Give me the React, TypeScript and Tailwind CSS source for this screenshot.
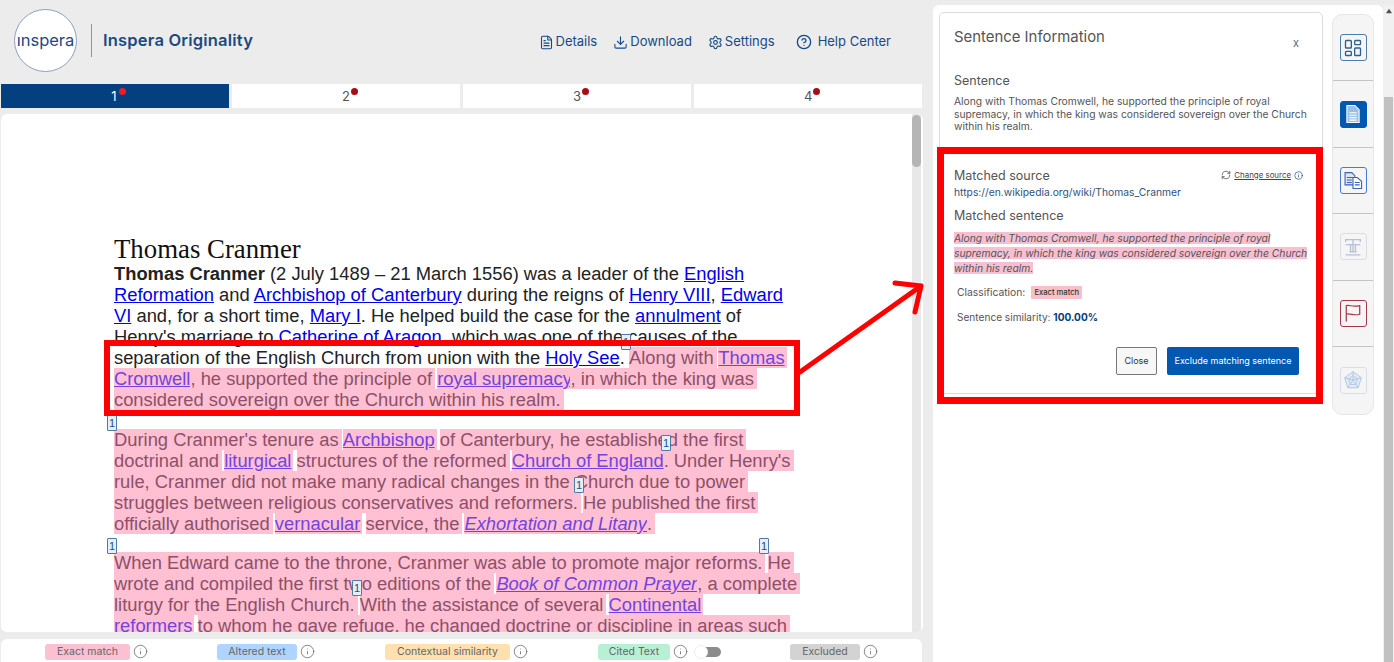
import { CircleHelp, Download, FileText, Info, LayoutDashboard, RefreshCw, Settings } from "lucide-react";
import type { ReactNode } from "react";

const A = ({ children }: { children: ReactNode }) => (
  <a className="text-[#0000ee] underline">{children}</a>
);

// highlighted run, text gets washed out like the overlay in the report
const H = ({ children }: { children: ReactNode }) => (
  <span className="bg-[#ffc0d3] text-[#8d5069] [box-decoration-break:clone] shadow-[3px_0_0_#ffc0d3]">{children}</span>
);

const HL = ({ children, italic }: { children: ReactNode; italic?: boolean }) => (
  <a className={`bg-[#ffc0d3] text-[#7343e0] underline [box-decoration-break:clone] shadow-[2px_0_0_#ffc0d3] ${italic ? "italic" : ""}`}>
    {children}
  </a>
);

const Cite = ({ className }: { className: string }) => (
  <span className={`absolute flex h-[16px] w-[10px] items-center justify-center rounded-[1px] border border-[#4d7ba3] bg-[#e6eff5] font-['Liberation_Sans',sans-serif] text-[11px] leading-none text-[#1f4f7d] ${className}`}>
    1
  </span>
);

const NavItem = ({ icon, label, className }: { icon: ReactNode; label: string; className?: string }) => (
  <div className={`flex items-center gap-[2px] text-[13px] text-[#154a86] ${className ?? ""}`}>
    {icon}
    <span>{label}</span>
  </div>
);

const Tab = ({ n, active }: { n: number; active?: boolean }) => (
  <div className={`flex h-[24px] flex-1 items-center justify-center text-[13px] ${active ? "bg-[#04407f] text-white" : "bg-white text-[#555]"}`}>
    <span className={`relative top-[1px] ${active ? "-left-[1px]" : ""}`}>
      {n}
      <span className={`absolute top-[1px] h-[7px] w-[7px] rounded-full ${active ? "left-[8px] bg-[#ee1c25]" : "left-[9px] bg-[#a80d16]"}`} />
    </span>
  </div>
);

const LegendItem = ({ label, color, width, className }: { label: string; color: string; width: string; className: string }) => (
  <div className={`flex items-center ${className}`}>
    <span className={`flex h-[16px] items-center justify-center rounded-[3px] text-[10.5px] text-[#666] ${color} ${width}`}>{label}</span>
    <Info className="ml-[3px] h-[15px] w-[15px] text-[#666]" strokeWidth={1.25} />
  </div>
);

const SideButton = ({ children, className }: { children: ReactNode; className: string }) => (
  <div className="flex h-[66.4px] items-center justify-center border-b border-[#c4c4c4] last:border-b-0">
    <div className={`flex h-[27px] w-[27px] items-center justify-center rounded-[3px] border ${className}`}>{children}</div>
  </div>
);

const App = () => {
  return (
    <div className="relative flex h-[662px] w-[1394px] overflow-hidden bg-[#ececec] font-['Inter',sans-serif]">
      {/* Left: report */}
      <main className="flex w-[923px] shrink-0 flex-col pl-[1px]">
        <header className="flex h-[84px] shrink-0 items-center pb-[3px] pl-[13px]">
          <div className="flex h-[63px] w-[63px] items-center justify-center rounded-full border border-[#8ca0bd] bg-white text-[16.5px] text-[#1c4a80]">
            ınspera
          </div>
          <div className="ml-[14px] h-[33px] w-px bg-[#8298b4]" />
          <div className="mb-[1px] ml-[11px] text-[16.5px] font-semibold tracking-[0.2px] text-[#1c4a80]">Inspera Originality</div>
          <div className="ml-auto flex items-center pr-[32px] pt-[3px]">
            <NavItem icon={<FileText className="h-[15px] w-[15px]" strokeWidth={1.75} />} label="Details" />
            <NavItem className="ml-[16px]" icon={<Download className="h-[15px] w-[15px]" strokeWidth={1.75} />} label="Download" />
            <NavItem className="ml-[16px]" icon={<Settings className="h-[15px] w-[15px]" strokeWidth={1.75} />} label="Settings" />
            <NavItem className="ml-[21px] gap-[6px]" icon={<CircleHelp className="h-[16px] w-[16px]" strokeWidth={2} />} label="Help Center" />
          </div>
        </header>

        <nav className="flex shrink-0 gap-[3.5px] pr-[1px]">
          <Tab n={1} active />
          <Tab n={2} />
          <Tab n={3} />
          <Tab n={4} />
        </nav>

        <section className="relative mt-[6px] h-[518px] shrink-0 overflow-hidden rounded-[6px] bg-white pl-[113px] pr-[120px] pt-[121px] font-['Liberation_Sans',sans-serif] text-[18.35px] leading-[21px] text-[#222]">
          <h1 className="font-['Liberation_Serif',serif] text-[26.8px] leading-[28px] text-[#111]">Thomas Cranmer</h1>
          <p>
            <b>Thomas Cranmer</b> (2 July 1489 – 21 March 1556) was a leader of the <A>English Reformation</A> and{" "}
            <A>Archbishop of Canterbury</A> during the reigns of <A>Henry VIII</A>, <A>Edward VI</A> and, for a short time,{" "}
            <A>Mary I</A>. He helped build the case for the <A>annulment</A> of Henry's marriage to <A>Catherine of Aragon</A>, which
            was one of the causes of the separation of the English Church from union with the <A>Holy See</A>. <H>Along with</H>{" "}
            <HL>Thomas Cromwell</HL>
            <H>, he supported the principle of</H> <HL>royal supremacy</HL>
            <H>, in which the king was considered sovereign over the Church within his realm.</H>
          </p>
          <p className="mt-[18.6px]">
            <H>During Cranmer's tenure as</H> <HL>Archbishop</HL> <H>of Canterbury, he established the first doctrinal and</H>{" "}
            <HL>liturgical</HL> <H>structures of the reformed</H> <HL>Church of England</HL>
            <H>. Under Henry's rule, Cranmer did not make many radical changes in the Church due to power struggles between religious conservatives and reformers.</H>{" "}
            <H>He published the first officially authorised</H> <HL>vernacular</HL> <H>service, the</H>{" "}
            <HL italic>Exhortation and Litany</HL>
            <H>.</H>
          </p>
          <p className="mt-[18.4px]">
            <H>When Edward came to the throne, Cranmer was able to promote major reforms.</H> <H>He wrote and compiled the first two editions of the</H>{" "}
            <HL italic>Book of Common Prayer</HL>
            <H>, a complete liturgy for the English Church.</H> <H>With the assistance of several</H> <HL>Continental<br />reformers</HL>{" "}
            <H>to whom he gave refuge, he changed doctrine or discipline in areas such</H>
          </p>
          <Cite className="left-[620px] top-[220px]" />
          <Cite className="left-[106px] top-[301px]" />
          <Cite className="left-[660px] top-[321px]" />
          <Cite className="left-[573px] top-[363px]" />
          <Cite className="left-[106px] top-[424px]" />
          <Cite className="left-[758px] top-[424px]" />
          <Cite className="left-[351px] top-[466px]" />
          {/* scrollbar of the document */}
          <div className="absolute bottom-0 right-[2px] top-0 w-[9px] bg-[#e8e8e8]">
            <div className="mt-[1px] h-[52px] rounded-full bg-[#b5b5b5]" />
          </div>
        </section>

        <footer className="mr-[1px] mt-[7px] flex h-[23px] shrink-0 items-center rounded-t-[6px] bg-white pt-[2px]">
          <LegendItem className="ml-[44px]" label="Exact match" color="bg-[#fcc0d3]" width="w-[85px]" />
          <LegendItem className="ml-[69px]" label="Altered text" color="bg-[#aed4ff]" width="w-[80px]" />
          <LegendItem className="ml-[70px]" label="Contextual similarity" color="bg-[#ffe0ae]" width="w-[125px]" />
          <LegendItem className="ml-[70px]" label="Cited Text" color="bg-[#b8f0d5]" width="w-[72px]" />
          <div className="relative ml-[7px] h-[10px] w-[26px] rounded-full bg-[#8c8c8c]">
            <span className="absolute left-[-1px] top-[-2px] h-[14px] w-[14px] rounded-full border border-[#eee] bg-white" />
          </div>
          <LegendItem className="ml-[69px]" label="Excluded" color="bg-[#d3d3d3]" width="w-[70px]" />
        </footer>
      </main>

      {/* Right: sentence panel */}
      <aside className="ml-[10px] mt-[5px] flex w-[450px] shrink-0 gap-[9px] rounded-t-[6px] bg-white pl-[6px] pt-[7px] text-[#555]">
        <div className="h-[382px] w-[384px] shrink-0 rounded-[5px] border border-[#dcdcdc] px-[14px]">
          <div className="flex items-start justify-between">
            <h2 className="mt-[15px] text-[14.9px] leading-[18px]">Sentence Information</h2>
            <span className="mr-[9px] mt-[23px] text-[11px] leading-[14px] text-[#5a6a7a]">x</span>
          </div>
          <h3 className="mt-[23px] text-[12.5px] leading-[16px]">Sentence</h3>
          <p className="mt-[6px] text-[10.3px] leading-[12.5px]">
            Along with Thomas Cromwell, he supported the principle of royal supremacy, in which the king was considered sovereign over the Church within his realm.
          </p>
          <div className="mt-[35px] flex items-center justify-between">
            <h3 className="text-[12.5px] leading-[16px]">Matched source</h3>
            <div className="mr-[5px] flex items-center gap-[3px] text-[7.9px] text-[#444]">
              <RefreshCw className="h-[10px] w-[10px]" strokeWidth={1.75} />
              <span className="underline">Change source</span>
              <Info className="h-[9px] w-[9px] text-[#154a86]" strokeWidth={1.75} />
            </div>
          </div>
          <a className="mt-[1px] block text-[10.3px] leading-[14px] text-[#33527f]">https://en.wikipedia.org/wiki/Thomas_Cranmer</a>
          <h3 className="mt-[9px] text-[12.5px] leading-[16px]">Matched sentence</h3>
          <p className="mt-[7px] text-[10.3px] italic leading-[15.2px]">
            <span className="bg-[#f7c0d2] [box-decoration-break:clone]">
              Along with Thomas Cromwell, he supported the principle of royal supremacy, in which the king was considered sovereign over the Church within his realm.
            </span>
          </p>
          <div className="mt-[9px] flex items-center pl-[3px] text-[10.3px]">
            <span>Classification:</span>
            <span className="ml-[6px] flex h-[13px] w-[51px] items-center justify-center rounded-[1px] bg-[#f9c0c5] text-[7.6px] font-medium text-[#333]">Exact match</span>
          </div>
          <div className="mt-[9px] pl-[3px] text-[10.1px] leading-[14px]">
            Sentence similarity: <b className="text-[#04407f]">100.00%</b>
          </div>
          <div className="mt-[23px] flex justify-end gap-[10px] pr-[9px]">
            <button className="h-[28px] w-[41px] rounded-[2px] border border-[#777] bg-[#f7f7f7] text-[9px] text-[#333]">Close</button>
            <button className="h-[28px] w-[132px] rounded-[2px] bg-[#0058b0] text-[9px] text-white">Exclude matching sentence</button>
          </div>
        </div>

        <div className="mt-[2px] h-[401px] w-[42px] shrink-0 rounded-[10px] border border-[#e6e6e6] bg-[#f5f5f5]">
          <SideButton className="border-[#4b7cab] text-[#2c5f92]">
            <LayoutDashboard className="h-[20px] w-[20px]" strokeWidth={1.6} />
          </SideButton>
          <SideButton className="border-[#0058b0] bg-[#0058b0]">
            <svg viewBox="0 0 18 18" className="h-[22px] w-[22px]" fill="none" stroke="#fff" strokeWidth="0.9">
              <path d="M4 2h6.5L14 5.5V16H4z" fill="#9cc0e4" />
              <path d="M6 8h6M6 10h6M6 12h6M6 14h6" />
            </svg>
          </SideButton>
          <SideButton className="border-[#4a78d6]">
            <svg viewBox="0 0 18 18" className="h-[22px] w-[22px]" fill="none" stroke="#3d63b5" strokeWidth="0.9">
              <path d="M2.5 3H8l2.5 2.5V13h-8z" fill="#dbe5f7" />
              <path d="M9 7h3.5L16 10v6H9z" fill="#fff" />
              <path d="M4 7h5M4 9h4M4 11h4M10.5 11h4M10.5 13h4" />
            </svg>
          </SideButton>
          <SideButton className="border-[#dcdce8]">
            <svg viewBox="0 0 18 18" className="h-[22px] w-[22px]" fill="none" stroke="#b9bfd6" strokeWidth="1.1">
              <path d="M3 5V3h12v2M3 7h12M9 3v10M7 7v6M11 7v6M6 13h6M3 15.5h12" />
            </svg>
          </SideButton>
          <SideButton className="border-[#a13a46]">
            <svg viewBox="0 0 18 18" className="h-[22px] w-[22px]" fill="none" stroke="#a13a46" strokeWidth="1">
              <path d="M3.5 16V3c3-1 4.5 1.5 11 0v7c-5 1.5-8-1-11 0" />
            </svg>
          </SideButton>
          <SideButton className="border-[#d5e0ec]">
            <svg viewBox="0 0 18 18" className="h-[20px] w-[20px]" fill="#e3ecf7" stroke="#b4c8e0" strokeWidth="0.9">
              <path d="M9 1.5l7.5 5.5-2.9 9H4.4l-2.9-9z" />
              <path d="M9 5l4 3-1.5 5h-5L5 8zM9 1.5V9M16.5 7L9 9M13.6 16L9 9M4.4 16L9 9M1.5 7L9 9" fill="none" />
            </svg>
          </SideButton>
        </div>
      </aside>

      {/* scrollbar of the side panel */}
      <div className="ml-auto mt-[5px] flex w-[11px] shrink-0 flex-col items-center bg-[#f1f1f1]">
        <svg viewBox="0 0 8 8" className="mt-[3px] h-[6px] w-[6px]" fill="#505050">
          <path d="M4 1l4 6H0z" />
        </svg>
        <div className="mt-[83px] w-[9px] flex-1 bg-[#c1c1c1]" />
      </div>

      {/* red annotations drawn over the screenshot */}
      <div className="pointer-events-none absolute left-[104px] top-[340px] h-[76px] w-[696px] border-[6px] border-[#ff0000]" />
      <div className="pointer-events-none absolute left-[937px] top-[147px] h-[257px] w-[386px] border-[7px] border-[#ff0000]" />
      <svg className="pointer-events-none absolute left-[795px] top-[275px] h-[105px] w-[135px]" viewBox="0 0 135 105" fill="none" stroke="#ff0000" strokeWidth="5" strokeLinecap="round" strokeLinejoin="round">
        <path d="M5 97L126 11M100 8l26 3-6 26" />
      </svg>
    </div>
  );
};

export default App;
